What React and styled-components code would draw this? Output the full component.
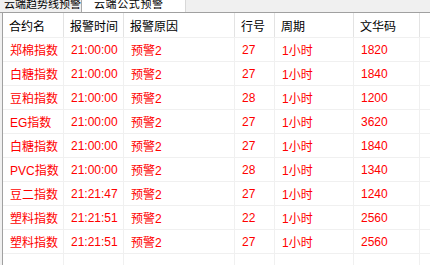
import React from "react";
import styled, { createGlobalStyle } from "styled-components";

const GlobalStyle = createGlobalStyle`
  html, body {
    margin: 0;
    padding: 0;
    background: #f0f0f0;
    overflow: hidden;
  }
`;

const FONT = `"Liberation Sans", "Noto Sans CJK SC", sans-serif`;

const COLS = [61, 60, 111, 40, 79, 66];

const rows = [
  ["郑棉指数", "21:00:00", "预警2", "27", "1小时", "1820"],
  ["白糖指数", "21:00:00", "预警2", "27", "1小时", "1840"],
  ["豆粕指数", "21:00:00", "预警2", "28", "1小时", "1200"],
  ["EG指数", "21:00:00", "预警2", "27", "1小时", "3620"],
  ["白糖指数", "21:00:00", "预警2", "27", "1小时", "1840"],
  ["PVC指数", "21:00:00", "预警2", "28", "1小时", "1340"],
  ["豆二指数", "21:21:47", "预警2", "27", "1小时", "1240"],
  ["塑料指数", "21:21:51", "预警2", "22", "1小时", "2560"],
  ["塑料指数", "21:21:51", "预警2", "27", "1小时", "2560"],
];

const headers = ["合约名", "报警时间", "报警原因", "行号", "周期", "文华码"];

const Page = styled.div`
  height: 265px;
  display: flex;
  flex-direction: column;
  font-family: ${FONT};
`;

const TabBar = styled.div`
  height: 12px;
  display: flex;
  overflow: hidden;
  border-bottom: 1px solid #a0a0a0;
  background: #f0f0f0;
`;

const Tab = styled.div`
  width: ${(p) => p.$w}px;
  height: 12px;
  display: flex;
  padding-left: ${(p) => p.$pad}px;
  box-sizing: border-box;
  background: ${(p) => (p.$active ? "#fff" : "#f0f0f0")};
  border-right: 1px solid ${(p) => (p.$active ? "#d8d8d8" : "#a8a8a8")};
  font-size: 11px;
  line-height: 12px;
  color: #000;
  overflow: hidden;
`;

const TabLabel = styled.span`
  margin-top: -2px;
  white-space: nowrap;
  letter-spacing: ${(p) => p.$ls || 0}px;
`;

const Grid = styled.div`
  flex: 1;
  display: flex;
  flex-direction: column;
  margin-left: 2px;
  border-left: 1px solid #a0a0a0;
  background: #fff;
`;

const Row = styled.div`
  display: flex;
  height: ${(p) => p.$h}px;
  border-bottom: 1px solid #f0f0f0;
`;

const FillRow = styled.div`
  flex: 1;
  display: flex;
`;

const Cell = styled.div`
  width: ${(p) => p.$w}px;
  flex: ${(p) => (p.$w ? "none" : 1)};
  border-right: 1px solid ${(p) => (p.$head ? "#e3e3e3" : "#f0f0f0")};
  padding-left: ${(p) => (p.$head ? 6 : 7)}px;
  box-sizing: border-box;
  display: flex;
  align-items: center;
  font-size: 12px;
  color: ${(p) => (p.$head ? "#000" : "#ff0000")};
  white-space: nowrap;
  overflow: hidden;
  &:last-child {
    border-right: none;
  }
`;

export default function App() {
  return (
    <Page>
      <GlobalStyle />
      <TabBar>
        <Tab $w={82} $pad={4}>
          <TabLabel>云端趋势线预警</TabLabel>
        </Tab>
        <Tab $w={104} $pad={12} $active>
          <TabLabel $ls={0.6}>云端公式预警</TabLabel>
        </Tab>
      </TabBar>
      <Grid>
        <Row $h={24}>
          {headers.map((h, i) => (
            <Cell key={i} $w={COLS[i]} $head>
              {h}
            </Cell>
          ))}
          <Cell $head />
        </Row>
        {rows.map((r, ri) => (
          <Row key={ri} $h={23}>
            {r.map((v, i) => (
              <Cell key={i} $w={COLS[i]}>
                {v}
              </Cell>
            ))}
            <Cell />
          </Row>
        ))}
        <FillRow>
          {COLS.map((w, i) => (
            <Cell key={i} $w={w} />
          ))}
          <Cell />
        </FillRow>
      </Grid>
    </Page>
  );
}
